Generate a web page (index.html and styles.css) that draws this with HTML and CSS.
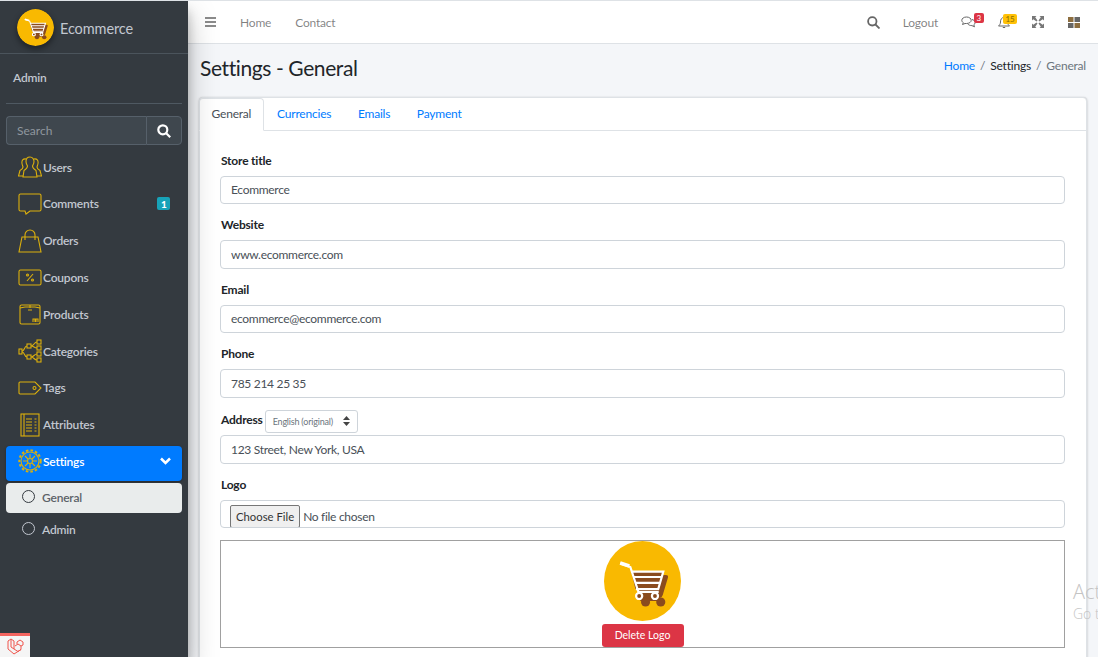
FILE: index.html
```html
<!DOCTYPE html>
<html lang="en">
  <head>
    <meta charset="UTF-8" />
    <meta name="viewport" content="width=device-width, initial-scale=1.0" />
    <title>Settings - General</title>
    <link rel="stylesheet" href="styles.css">
  </head>
  <body>
    <svg class="sprites" width="0" height="0">
      <symbol id="cart-logo" viewBox="0 0 76 80" preserveAspectRatio="none">
        <ellipse cx="38" cy="40" rx="38" ry="40" fill="#f9b901" />
        <path d="M31 34h30q3 0 2 3l-5 17q-1 3-3 3H38z" fill="#8a4b1e" />
        <path d="M28 30l8 30h18l-2-6" fill="#8a4b1e" />
        <circle cx="41" cy="61" r="4.500" fill="#8a4b1e" />
        <circle cx="56" cy="61" r="4.500" fill="#8a4b1e" />
        <path d="M27 31h31l-5 17H31z" fill="#8a4b1e" />
        <path d="M16 22.500l10 3.500 8 25h20M27 30.700h31.500l-5 17.500H31.500M29 36h27.500M30.500 41.800h24.500" fill="none" stroke="#fff" stroke-width="2.200" />
        <path d="M16 22l9 3" stroke="#fff" stroke-width="3.500" />
        <circle cx="34.700" cy="55" r="3" fill="#8a4b1e" stroke="#fff" stroke-width="2.200" />
        <circle cx="50.300" cy="55" r="3" fill="#8a4b1e" stroke="#fff" stroke-width="2.200" />
      </symbol>
    </svg>

    <div class="wrapper">
      <aside class="sidebar">
        <div class="brand">
          <svg class="brand-logo"><use href="#cart-logo" /></svg>
          <span>Ecommerce</span>
        </div>
        <div class="user-panel">Admin</div>
        <div class="sidebar-search">
          <input type="text" placeholder="Search" />
          <button type="button" aria-label="Search">
            <svg width="14" height="14" viewBox="0 0 14 14" fill="none" stroke="#fff" stroke-width="2.200">
              <circle cx="5.800" cy="5.800" r="4.500" /><path d="M9.200 9.200l4 4" />
            </svg>
          </button>
        </div>

        <ul class="menu">
          <li class="menu-item">
            <svg class="menu-icon" viewBox="0 0 24 24">
              <path d="M12 2c-2.500 0-4 2-4 4.500 0 2 1 3.500 1.500 4.500 0 2-1 3-3.500 4.500L5 22h14l-1-6.500C15.500 14 14.500 13 14.500 11c.5-1 1.500-2.500 1.500-4.500C16 4 14.500 2 12 2z" />
              <path d="M8 4C5 3.500 3.500 5.500 4 8.500c.2 1.500.8 2.500 1 3.500 0 1.500-1 2.500-3 3.500L.5 21H5M16 4c3-.5 4.500 1.500 4 4.500-.2 1.500-.8 2.500-1 3.500 0 1.500 1 2.500 3 3.500l1.500 5.500H19" />
            </svg>
            <span>Users</span>
          </li>
          <li class="menu-item">
            <svg class="menu-icon" viewBox="0 0 24 24">
              <path d="M2.500 2h19A1.500 1.500 0 0 1 23 3.500v14a1.500 1.500 0 0 1-1.500 1.500H12l-4 3-1-3H2.500A1.500 1.500 0 0 1 1 17.500v-14A1.500 1.500 0 0 1 2.500 2z" />
            </svg>
            <span>Comments</span>
            <b class="menu-badge">1</b>
          </li>
          <li class="menu-item">
            <svg class="menu-icon" viewBox="0 0 24 24">
              <path d="M4 8h16l3 15H1z" /><path d="M7 11V6a5 5 0 0 1 10 0v5" />
            </svg>
            <span>Orders</span>
          </li>
          <li class="menu-item">
            <svg class="menu-icon" viewBox="0 0 24 24">
              <rect x="1" y="5" width="22" height="15" rx="1.500" />
              <path d="M9 16l6-7" /><circle cx="9.500" cy="10" r="1" /><circle cx="14.500" cy="15" r="1" />
            </svg>
            <span>Coupons</span>
          </li>
          <li class="menu-item">
            <svg class="menu-icon" viewBox="0 0 24 24">
              <rect x="2" y="3" width="20" height="19" rx="1.500" /><path d="M2 6c6-1.500 14-1.500 20 0M12 3v3M10 8h4" />
              <path d="M15 20v-3h2v3M18 20v-3h2v3" />
            </svg>
            <span>Products</span>
          </li>
          <li class="menu-item">
            <svg class="menu-icon" viewBox="0 0 24 24">
              <rect x="1" y="10" width="3" height="5" /><rect x="9" y="5" width="4" height="4" />
              <rect x="9" y="16" width="4" height="4" /><rect x="19" y="1" width="4" height="4" />
              <rect x="19" y="7" width="4" height="4" /><rect x="19" y="13" width="4" height="4" />
              <rect x="19" y="19" width="4" height="4" />
              <path d="M4 12c3 0 2-5 5-5M4 13c3 0 2 5 5 5M13 7c3 0 3-4 6-4M13 7c3 0 3 2 6 2M13 18c3 0 3-3 6-3M13 18c3 0 3 3 6 3" />
            </svg>
            <span>Categories</span>
          </li>
          <li class="menu-item">
            <svg class="menu-icon" viewBox="0 0 24 24">
              <path d="M2 6h15l6 6-6 6H2a1 1 0 0 1-1-1V7a1 1 0 0 1 1-1z" /><circle cx="16.500" cy="12" r="1.500" />
            </svg>
            <span>Tags</span>
          </li>
          <li class="menu-item">
            <svg class="menu-icon" viewBox="0 0 24 24">
              <rect x="3" y="1" width="18" height="22" /><path d="M6 1v22M8 6h6M8 9h6M8 12h6M8 15h6M8 18h6M16.500 6h2M16.500 9h2M16.500 12h2M16.500 15h2M16.500 18h2" />
            </svg>
            <span>Attributes</span>
          </li>
          <li class="menu-item active">
            <svg class="menu-icon" viewBox="0 0 24 24">
              <circle cx="12" cy="12" r="9" /><circle cx="12" cy="12" r="10.700" stroke-width="2" stroke-dasharray="2.500 2.100" />
              <circle cx="12" cy="12" r="2.500" /><path d="M12 5v4M12 15v4M5 12h4M15 12h4M7 7l3 3M14 14l3 3M17 7l-3 3M10 14l-3 3" />
            </svg>
            <span>Settings</span>
            <svg class="menu-chevron" width="11" height="8" viewBox="0 0 11 8" fill="none" stroke="#fff" stroke-width="2.500">
              <path d="M1 1.500l4.500 4.500L10 1.500" />
            </svg>
          </li>
          <li class="sub-item current"><i class="circle"></i><span>General</span></li>
          <li class="sub-item"><i class="circle"></i><span>Admin</span></li>
        </ul>
      </aside>

      <div class="main">
        <nav class="navbar">
          <svg class="nav-bars" width="11" height="10" viewBox="0 0 11 10" fill="none" stroke="#666" stroke-width="1.600">
            <path d="M0 1h11M0 5h11M0 9h11" />
          </svg>
          <a class="nav-link home-link">Home</a>
          <a class="nav-link">Contact</a>
          <div class="nav-right">
            <svg class="nav-search" width="13" height="13" viewBox="0 0 13 13" fill="none" stroke="#666" stroke-width="1.800">
              <circle cx="5.300" cy="5.300" r="4.200" /><path d="M8.500 8.500l4 4" />
            </svg>
            <a class="nav-link logout">Logout</a>
            <div class="nav-icon comments-icon">
              <svg width="15" height="12" viewBox="0 0 15 12" fill="none" stroke="#666" stroke-width="1">
                <path d="M5.500 1C2.800 1 .8 2.500.8 4.300c0 1 .6 1.800 1.500 2.400L1.500 8.500l2.500-1h1.500c2.700 0 4.700-1.400 4.700-3.200S8.200 1 5.500 1z" />
                <path d="M11 3.500c1.800.5 3.200 1.600 3.200 3 0 1-.6 1.800-1.400 2.300l.7 2-2.600-1.200c-1.800 0-3.400-.6-4.100-1.700" />
              </svg>
              <b class="nav-badge red">3</b>
            </div>
            <div class="nav-icon bell-icon">
              <svg width="12" height="13" viewBox="0 0 12 13" fill="none" stroke="#666" stroke-width="1">
                <path d="M6 1.500C3.500 1.500 2.500 3.500 2.500 6c0 2-1 3-2 4h11c-1-1-2-2-2-4 0-2.500-1-4.500-3.500-4.500zM4.800 11.500h2.400" />
              </svg>
              <b class="nav-badge yellow">15</b>
            </div>
            <svg class="nav-expand" width="12" height="12" viewBox="0 0 12 12" fill="#777">
              <path d="M0 0h4.500L3.200 1.300 5.500 4.500 4.500 5.500 1.300 3.200 0 4.500zM12 0v4.500l-1.300-1.300-3.200 2.300-1-1 2.300-3.200L7.500 0zM0 12V7.500l1.300 1.300 3.200-2.300 1 1-2.300 3.200L4.500 12zM12 12H7.500l1.300-1.300-2.300-3.200 1-1 3.200 2.300L12 7.500z" />
            </svg>
            <svg class="nav-grid" width="12" height="11" viewBox="0 0 12 11">
              <rect width="5.500" height="5" fill="#8d6e3f" /><rect x="6.500" width="5.500" height="5" fill="#666" />
              <rect y="6" width="5.500" height="5" fill="#666" /><rect x="6.500" y="6" width="5.500" height="5" fill="#8d6e3f" />
            </svg>
          </div>
        </nav>

        <div class="content">
          <div class="content-header">
            <h1>Settings - General</h1>
            <ol class="breadcrumb">
              <li><a>Home</a></li>
              <li class="sep">/</li>
              <li>Settings</li>
              <li class="sep">/</li>
              <li class="last">General</li>
            </ol>
          </div>

          <div class="card">
            <div class="tabs">
              <a class="tab selected">General</a>
              <a class="tab">Currencies</a>
              <a class="tab">Emails</a>
              <a class="tab">Payment</a>
            </div>

            <form class="card-body">
              <div class="form-group">
                <label>Store title</label>
                <input class="form-control" type="text" value="Ecommerce" />
              </div>
              <div class="form-group">
                <label>Website</label>
                <input class="form-control" type="text" value="www.ecommerce.com" />
              </div>
              <div class="form-group">
                <label>Email</label>
                <input class="form-control" type="text" value="ecommerce@ecommerce.com" />
              </div>
              <div class="form-group">
                <label>Phone</label>
                <input class="form-control" type="text" value="785 214 25 35" />
              </div>
              <div class="form-group address-group">
                <div class="label-row">
                  <label>Address</label>
                  <div class="lang-select">
                    <span>English (original)</span>
                    <svg width="7" height="10" viewBox="0 0 7 10" fill="#444"><path d="M3.500 0L7 4H0zM3.500 10L0 6h7z" /></svg>
                  </div>
                </div>
                <input class="form-control" type="text" value="123 Street, New York, USA" />
              </div>
              <div class="form-group">
                <label>Logo</label>
                <input class="form-control file-control" type="file" />
              </div>
              <div class="logo-box">
                <svg class="logo-preview"><use href="#cart-logo" /></svg>
                <button class="btn-delete" type="button">Delete Logo</button>
              </div>
            </form>
          </div>
        </div>
      </div>
    </div>

    <!-- debugbar tab and the windows watermark lie over the page -->
    <div class="debug-tab">
      <svg width="17" height="17" viewBox="0 0 17 17" fill="none" stroke="#f0554c" stroke-width="1">
        <path d="M1 3l3-2 3 2v8l4 2.500 3-2V8l-3-2-3 2M1 3v8l6 5 7-4.500M4 1v8l3 2M14 8l2-1V4l-3-2-3 2v2" />
      </svg>
    </div>
    <div class="watermark">
      <div class="watermark-title">Activate Windows</div>
      <div class="watermark-sub">Go to Settings to activate Windows.</div>
    </div>
  </body>
</html>
```

FILE: styles.css
```css
* {
  margin: 0;
  padding: 0;
  box-sizing: border-box;
}

html,
body {
  height: 100%;
  overflow: hidden;
}

body {
  font-family: "Lato", "Open Sans", sans-serif;
  font-size: 12px;
  letter-spacing: -0.2px;
  color: #212529;
  background-color: #f4f6f9;
  border-top: 1px solid #dee2e6;
}

.sprites {
  position: absolute;
}

.wrapper {
  display: flex;
  height: 656px;
}

/* Sidebar */
.sidebar {
  flex: 0 0 188px;
  width: 188px;
  min-width: 0;
  background: #343a40;
  color: #c2c7d0;
  box-shadow: 0 14px 28px rgba(0, 0, 0, 0.25), 0 10px 10px rgba(0, 0, 0, 0.22);
  z-index: 2;
}

.brand {
  display: flex;
  align-items: center;
  height: 53px;
  padding-left: 17px;
  border-bottom: 1px solid #4b545c;
  font-size: 14.500px;
  letter-spacing: -0.1px;
}

.brand span {
  margin-top: 3px;
}

.brand-logo {
  width: 37px;
  height: 37px;
  margin-right: 6px;
  border-radius: 50%;
  box-shadow: 0 3px 6px rgba(0, 0, 0, 0.45);
}

.user-panel {
  margin: 0 6px;
  padding-left: 7px;
  height: 50px;
  line-height: 48px;
  font-weight: 600;
  border-bottom: 1px solid #4f5962;
}

.sidebar-search {
  display: flex;
  margin: 12px 6px 0;
  height: 29px;
}

.sidebar-search input {
  flex: 1;
  min-width: 0;
  padding-left: 10px;
  font: inherit;
  color: #fff;
  background: #3f474e;
  border: 1px solid #56606a;
  border-right: 0;
  border-radius: 4px 0 0 4px;
}

.sidebar-search input::placeholder {
  color: #8f979e;
}

.sidebar-search button {
  flex: 0 0 36px;
  display: flex;
  align-items: center;
  justify-content: center;
  background: #3f474e;
  border: 1px solid #56606a;
  border-radius: 0 4px 4px 0;
}

.menu {
  list-style: none;
  margin: 6.600px 6px 0;
}

.menu-item {
  display: flex;
  align-items: center;
  height: 35px;
  margin-bottom: 1.800px;
  padding: 0 12px 4px;
  border-radius: 4px;
  font-weight: 600;
}

.menu-item span {
  flex: 1;
  margin-left: 1px;
}

.menu-icon {
  flex: 0 0 24px;
  width: 24px;
  height: 24px;
  fill: none;
  stroke: #dcb00c;
  stroke-width: 1.100;
}

.menu-badge {
  padding: 1.500px 3.500px;
  font-size: 10px;
  line-height: 10px;
  color: #fff;
  background: #17a2b8;
  border-radius: 2px;
}

.menu-item.active {
  margin-bottom: 2px;
  color: #fff;
  background: #007bff;
  box-shadow: 0 1px 3px rgba(0, 0, 0, 0.3);
}

.menu-chevron {
  margin-right: -1px;
}

.sub-item {
  display: flex;
  align-items: center;
  height: 30px;
  margin-bottom: 2px;
  padding: 0 10px 0 16px;
  border-radius: 4px;
  font-weight: 600;
}

.sub-item.current {
  color: #5b6167;
  background: #e9ecec;
}

.circle {
  width: 13px;
  height: 13px;
  margin: 0 7px 2px 0;
  border: 1.500px solid #c2c7d0;
  border-radius: 50%;
}

.current .circle {
  border-color: #343a40;
}

/* Top bar */
.main {
  flex: 1;
  min-width: 0;
}

.navbar {
  display: flex;
  align-items: center;
  height: 43px;
  padding: 0 18px 0 17px;
  background: #fff;
  border-bottom: 1px solid #dee2e6;
}

.nav-link {
  color: rgba(0, 0, 0, 0.5);
}

.home-link {
  margin: 0 24px 0 24px;
}

.nav-right {
  display: flex;
  align-items: center;
  margin-left: auto;
}

.logout {
  margin: 0 23px 0 23px;
}

.nav-icon {
  position: relative;
  display: flex;
}

.comments-icon {
  margin-right: 22px;
}

.bell-icon {
  margin-right: 22px;
}

.nav-badge {
  position: absolute;
  padding: 0 3px;
  font-size: 8px;
  font-weight: 400;
  line-height: 10px;
  border-radius: 2px;
}

.nav-badge.red {
  top: -3px;
  right: -8px;
  color: #fff;
  background: #dc3545;
}

.nav-badge.yellow {
  top: -2px;
  right: -7px;
  padding: 0 2.500px;
  color: #8a6d00;
  background: #ffc107;
}

.nav-grid {
  margin-left: 24px;
}

/* Content */
.content {
  padding: 0 11px;
}

.content-header {
  display: flex;
  justify-content: space-between;
  align-items: center;
  height: 53px;
  padding-bottom: 7px;
}

.content-header h1 {
  margin-left: 1px;
  font-size: 21px;
  font-weight: 400;
  letter-spacing: -0.4px;
}

.breadcrumb {
  display: flex;
  list-style: none;
  margin-top: -4px;
  margin-right: 1px;
}

.breadcrumb a {
  color: #007bff;
}

.breadcrumb .sep {
  margin: 0 5px;
  color: #6c757d;
}

.breadcrumb .last {
  color: #6c757d;
}

.card {
  height: 700px;
  background: #fff;
  border: 1px solid #dee2e6;
  border-radius: 4px;
  box-shadow: 0 0 1px rgba(0, 0, 0, 0.125), 0 1px 3px rgba(0, 0, 0, 0.2);
}

.tabs {
  display: flex;
  height: 33px;
  margin-left: -1px;
  border-bottom: 1px solid #dee2e6;
}

.tab {
  height: 33px;
  padding: 0 12.300px;
  line-height: 29px;
  color: #007bff;
  border: 1px solid transparent;
}

.tab.selected {
  padding: 0 11.500px;
  color: #495057;
  background: #fff;
  border-color: #dee2e6 #dee2e6 #fff;
  border-radius: 4px 4px 0 0;
}

.card-body {
  padding: 21.700px 21px 0 20px;
}

.form-group {
  height: 64.500px;
}

.address-group {
  height: 67px;
}

.address-group .form-control {
  height: 29px;
  padding-top: 1px;
}

.form-group label {
  display: block;
  height: 23px;
  padding-left: 1px;
  line-height: 15px;
  font-weight: 700;
}

.form-control {
  display: block;
  width: 100%;
  height: 28.500px;
  padding: 0 10px;
  font: inherit;
  letter-spacing: -0.3px;
  color: #495057;
  background: #fff;
  border: 1px solid #ced4da;
  border-radius: 4px;
}

.file-control {
  height: 28px;
  padding: 4px 9px 0;
  overflow: hidden;
}

.file-control::file-selector-button {
  height: 23px;
  margin-right: 3px;
  padding: 0 5px;
  font: inherit;
  font-size: 11.300px;
  color: #333;
  background: #efefef;
  border: 1px solid #767676;
  border-radius: 2px;
}

.label-row {
  display: flex;
  height: 25px;
  margin-top: -1px;
}

.label-row label {
  padding-top: 2px;
}

.lang-select {
  display: flex;
  align-items: center;
  justify-content: space-between;
  width: 93px;
  height: 23px;
  margin-left: 2px;
  padding: 0 7px;
  font-size: 9px;
  color: #6c757d;
  background: #fff;
  border: 1px solid #ced4da;
  border-radius: 3px;
}

.logo-box {
  display: flex;
  flex-direction: column;
  align-items: center;
  height: 108px;
  margin-top: -1.400px;
  border: 1px solid #a0a0a0;
}

.logo-preview {
  width: 77px;
  height: 80px;
}

.btn-delete {
  width: 82px;
  height: 23px;
  margin-top: 3px;
  font: inherit;
  font-size: 10.500px;
  color: #fff;
  background: #dc3545;
  border: 0;
  border-radius: 3px;
}

/* Overlays */
.debug-tab {
  position: absolute;
  left: 0;
  bottom: 0;
  z-index: 3;
  display: flex;
  align-items: center;
  justify-content: center;
  width: 30px;
  height: 24px;
  background: #f5f5f5;
  border-top: 3px solid #f4645f;
}

.watermark {
  position: absolute;
  left: 1073px;
  top: 580px;
  z-index: 3;
  white-space: nowrap;
  font-family: "Open Sans", sans-serif;
  font-weight: 300;
  letter-spacing: 0;
  color: #c4c4c4;
}

.watermark-title {
  font-size: 20px;
  line-height: 24px;
}

.watermark-sub {
  font-size: 14px;
  line-height: 20px;
}
```
